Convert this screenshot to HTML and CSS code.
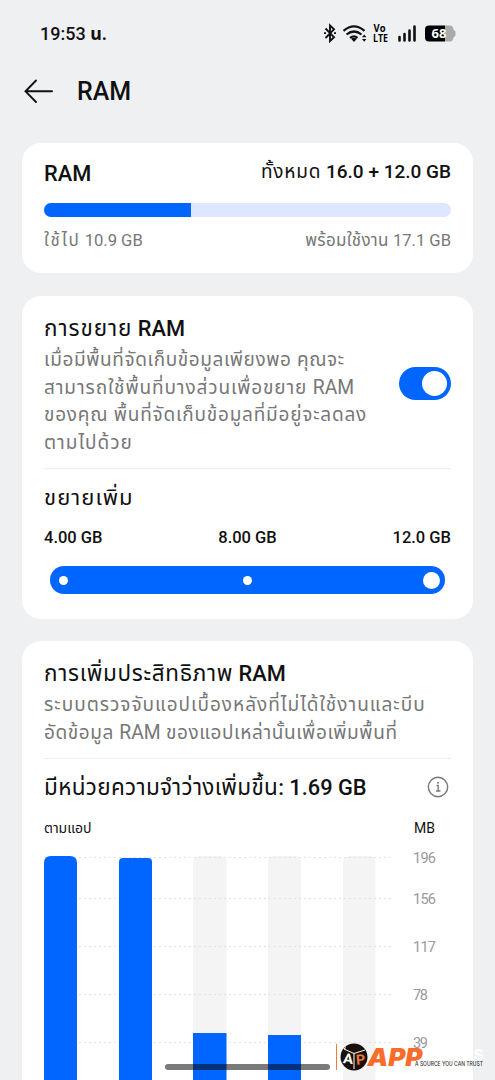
FILE: index.html
```html
<!DOCTYPE html>
<html lang="th">
<head>
<meta charset="utf-8">
<title>RAM</title>
<link rel="stylesheet" href="styles.css">
</head>
<body>
<div class="screen">
  <header class="status">
    <span class="clock">19:53 <span class="th">น.</span></span>
    <svg class="status-icons" width="134" height="22" viewBox="0 0 134 22">
      <path d="M1.500 6.500 10 15.200 6 19V3.500L10 7.300 1.500 16" fill="none" stroke="#111" stroke-width="1.900"/>
      <path d="M0 11.200h2M10 11.200h2" stroke="#111" stroke-width="1.800"/>
      <path d="M19.500 8.800Q30 0 40.500 8.800M22.500 12.500Q30 6.500 37.500 12.500M26 15.800Q30 12.800 33.500 15.800" fill="none" stroke="#111" stroke-width="2.200"/>
      <path d="M27 16.800Q30 14.800 33 16.800L30 20zM38 15.200l2.200-2.700 2.200 2.700zM38 17l2.200 2.700 2.200-2.700z" fill="#111"/>
      <text x="49.500" y="9.500" class="volte" textLength="12" lengthAdjust="spacingAndGlyphs">Vo</text>
      <text x="49" y="19.500" class="volte" textLength="15" lengthAdjust="spacingAndGlyphs">LTE</text>
      <path d="M75.500 18.500v-3.500M80.500 18.500v-6.500M85.500 18.500V8.500M90.500 18.500V4.500" stroke="#111" stroke-width="2.600" stroke-linecap="round"/>
      <path d="M105 3.500h16v16h-16a4 4 0 0 1-4-4v-8a4 4 0 0 1 4-4z" fill="#000"/>
      <path d="M121 3.500h5q3 0 3.500 4l2 2v4l-2 2q-.5 4-3.500 4h-5z" fill="#aaa"/>
      <text x="107.500" y="16.300" class="battery" textLength="15">68</text>
    </svg>
  </header>
  <div class="titlebar">
    <svg width="30" height="26" viewBox="0 0 30 26"><path d="M12 1.500 1.500 12.300 12 23M1.500 12.300H28" fill="none" stroke="#111" stroke-width="1.900" stroke-linecap="round"/></svg>
    <h1>RAM</h1>
  </div>

  <section class="card usage">
    <div class="row usage-head"><h2>RAM</h2><strong class="total"><span class="th">ทั้งหมด</span> 16.0 + 12.0 GB</strong></div>
    <div class="meter"><div class="meter-fill"></div></div>
    <div class="row usage-foot"><span><span class="th used">ใช้ไป</span> 10.9 GB</span><span><span class="th available">พร้อมใช้งาน</span> 17.1 GB</span></div>
  </section>

  <section class="card expand">
    <div class="row toggle-row">
      <div>
        <h2 class="heading"><span class="th">การขยาย</span> RAM</h2>
        <p class="desc"><span class="l1">เมื่อมีพื้นที่จัดเก็บข้อมูลเพียงพอ คุณจะ</span><br><span class="l2">สามารถใช้พื้นที่บางส่วนเพื่อขยาย <span class="latin">RAM</span></span><br><span class="l3">ของคุณ พื้นที่จัดเก็บข้อมูลที่มีอยู่จะลดลง</span><br><span class="l4">ตามไปด้วย</span></p>
      </div>
      <div class="toggle"><div class="knob"></div></div>
    </div>
    <h3 class="sub"><span class="th">ขยายเพิ่ม</span></h3>
    <div class="row sizes"><span>4.00 GB</span><span>8.00 GB</span><span>12.0 GB</span></div>
    <div class="slider"><i class="stop"></i><i class="stop"></i><i class="thumb"></i></div>
  </section>

  <section class="card optimize">
    <h2 class="heading"><span class="th optimize-title">การเพิ่มประสิทธิภาพ</span> RAM</h2>
    <p class="desc"><span class="l5">ระบบตรวจจับแอปเบื้องหลังที่ไม่ได้ใช้งานและบีบ</span><br><span class="l6">อัดข้อมูล <span class="latin">RAM</span> ของแอปเหล่านั้นเพื่อเพิ่มพื้นที่</span></p>
    <div class="row free"><h2><span class="th">มีหน่วยความจำว่างเพิ่มขึ้น</span>: 1.69 GB</h2>
      <svg class="info" width="22" height="22" viewBox="0 0 22 22"><circle cx="11" cy="11" r="9.700" fill="none" stroke="#777" stroke-width="1.400"/><path d="M9.500 9.500h1.700v5.500M9 15h4.500" fill="none" stroke="#777" stroke-width="1.300"/><circle cx="11" cy="6.800" r="1" fill="#777"/></svg>
    </div>
    <div class="row chart-head"><span class="th">ตามแอป</span><span class="unit">MB</span></div>
    <svg class="chart" width="428" height="225" viewBox="0 0 428 225">
      <path d="M149 225V7q0-6 6-6h21.500q6 0 6 6v218zM224 225V7q0-6 6-6h21q6 0 6 6v218zM299 225V7q0-6 6-6h20.500q6 0 6 6v218z" fill="#f4f4f4"/>
      <path d="M0 2.500h349M0 43.500h349M0 91.500h349M0 139.500h349M0 187.500h349" stroke="#e2e2e2" stroke-dasharray="2 3"/>
      <path d="M0 225V8q0-7 7-7h19q7 0 7 7v217zM75 225V7q0-4 4-4h25q4 0 4 4v218zM149 225v-47h33.500v47zM224 225v-45h33v45z" fill="#0066ff"/>
      <g class="axis"><text x="369" y="7.500" textLength="23">196</text><text x="369" y="49" textLength="23">156</text><text x="369" y="97" textLength="23">117</text><text x="369" y="145" textLength="15">78</text><text x="369" y="193" textLength="15">39</text></g>
    </svg>
  </section>
  <div class="home-bar"></div>
  <svg class="mark" width="155" height="34" viewBox="0 0 155 34">
    <path d="M1.500 4v26" stroke="#f47a35" stroke-width="1"/>
    <circle cx="19" cy="17" r="13.500" fill="#1c100c"/>
    <path d="M9 9l10 4.500L30 10M19 13.500V29M9 9l2-1.500" fill="none" stroke="#fff" stroke-width="1"/>
    <text x="8" y="23.500" class="mono" transform="rotate(6 12 20)" textLength="10" lengthAdjust="spacingAndGlyphs">A</text>
    <text x="21" y="24.500" class="mono orange" transform="rotate(-5 24 20)">P</text>
    <text x="32.500" y="25.500" class="app" textLength="55" lengthAdjust="spacingAndGlyphs">APP</text>
    <text x="88" y="20" class="app-rest" textLength="61" lengthAdjust="spacingAndGlyphs">DISQUS</text>
    <text x="80" y="26" class="tagline" textLength="68" lengthAdjust="spacingAndGlyphs">A SOURCE YOU CAN TRUST</text>
  </svg>
</div>
</body>
</html>
```
FILE: styles.css
```css
* { box-sizing: border-box; }
body { margin: 0; background: #eff0f2; font-family: Roboto, "Noto Sans Thai", "Noto Sans", sans-serif; color: #111; }
h1, h2, h3, p { margin: 0; font-weight: 500; }
.screen { position: relative; height: 1080px; overflow: hidden; padding: 0 22px; white-space: nowrap; }
.th { font-weight: 400; }
.row { display: flex; justify-content: space-between; align-items: center; }
.status { display: flex; justify-content: space-between; align-items: center; height: 68px; padding: 0 18px; }
.clock { font-size: 18px; font-weight: 500; }
.clock .th { font-weight: 700; }
.status-icons { margin: -3px -3px 0 0; }
.volte { font: 700 10px "Open Sans", sans-serif; }
.battery { font: 700 13px "Open Sans", sans-serif; fill: #fff; }
.titlebar { display: flex; align-items: center; gap: 23px; height: 47px; padding-left: 2px; }
h1 { font-size: 25px; line-height: 30px; }
.card { width: 451px; background: #fff; border-radius: 19px; padding: 0 22px; }
.usage { height: 130px; margin-top: 28px; padding-top: 14px; }
.usage-head { height: 30px; }
h2 { font-size: 21.800px; line-height: 31px; }
h2 .th { font-size: 22.500px; letter-spacing: .95px; line-height: 28px; }
h2 .optimize-title { letter-spacing: .7px; }
.free h2 .th { letter-spacing: .33px; }
.usage-head h2 { padding-top: 2px; }
.total { font-size: 19px; font-weight: 500; }
.total .th { letter-spacing: .8px; }
.meter { height: 14px; margin-top: 16px; border-radius: 7px; background: #dde7ff; overflow: hidden; }
.meter-fill { width: 36%; height: 100%; background: #0066ff; }
.usage-foot { height: 30px; margin-top: 9px; font-size: 16.600px; color: #777; }
.usage-foot .th { font-size: 17px; }
.used { letter-spacing: 1.800px; }
.available { letter-spacing: .3px; }
.expand { height: 323px; margin-top: 23px; padding-top: 17px; }
.toggle-row { height: 156px; border-bottom: 1px solid #eee; align-items: flex-start; }
.desc { padding-top: 2px; font-size: 19px; line-height: 27.700px; font-weight: 400; color: #777; }
.latin { letter-spacing: 0; font-size: 19.300px; }
.l1 { letter-spacing: .6px; }
.l2 { letter-spacing: .88px; }
.l3 { letter-spacing: .78px; }
.l4 { letter-spacing: 1px; }
.l5 { letter-spacing: 1px; }
.l6 { letter-spacing: .6px; }
.toggle { width: 52px; height: 33px; margin-top: 54px; padding: 4px; border-radius: 17px; background: #0066ff; display: flex; justify-content: flex-end; }
.knob { width: 25px; height: 25px; border-radius: 50%; background: #fff; }
.sub { height: 30px; margin-top: 14px; font-size: 22px; line-height: 30px; letter-spacing: 1.100px; }
.sizes { height: 24px; margin-top: 12px; font-size: 16.500px; font-weight: 500; }
.slider { display: flex; justify-content: space-between; align-items: center; height: 28px; margin: 17px 6px 0; padding: 0 5px; background: #0066ff; border-radius: 14px; }
.stop { width: 9px; height: 9px; margin: 0 4px; border-radius: 50%; background: #fff; }
.thumb { width: 17px; height: 17px; border-radius: 50%; background: #fff; }
.optimize { height: 460px; margin-top: 22px; padding-top: 17px; }
.optimize .desc { height: 69px; }
.free { height: 58px; border-top: 1px solid #eee; }
.info { margin: -2px 2px 0 0; }
.chart-head { height: 24px; font-size: 14px; }
.unit { margin-right: 16px; }
.chart { display: block; margin-top: 15px; overflow: visible; }
.axis { font: 400 14.500px Roboto, sans-serif; fill: #999; }
.home-bar { position: absolute; left: 165px; top: 1064px; width: 165px; height: 6px; border-radius: 3px; background: rgba(0,0,0,.52); }
.mark { position: absolute; left: 335px; top: 1040px; }
.mono { font: 700 14px Roboto, sans-serif; fill: #fff; }
.orange { fill: #f47a35; }
.app { font: italic 900 24px Inter, sans-serif; fill: #f96d2b; }
.app-rest { font: 700 15px Inter, sans-serif; fill: #fff; }
.tagline { font: 500 6px Inter, sans-serif; fill: #333; }
```
